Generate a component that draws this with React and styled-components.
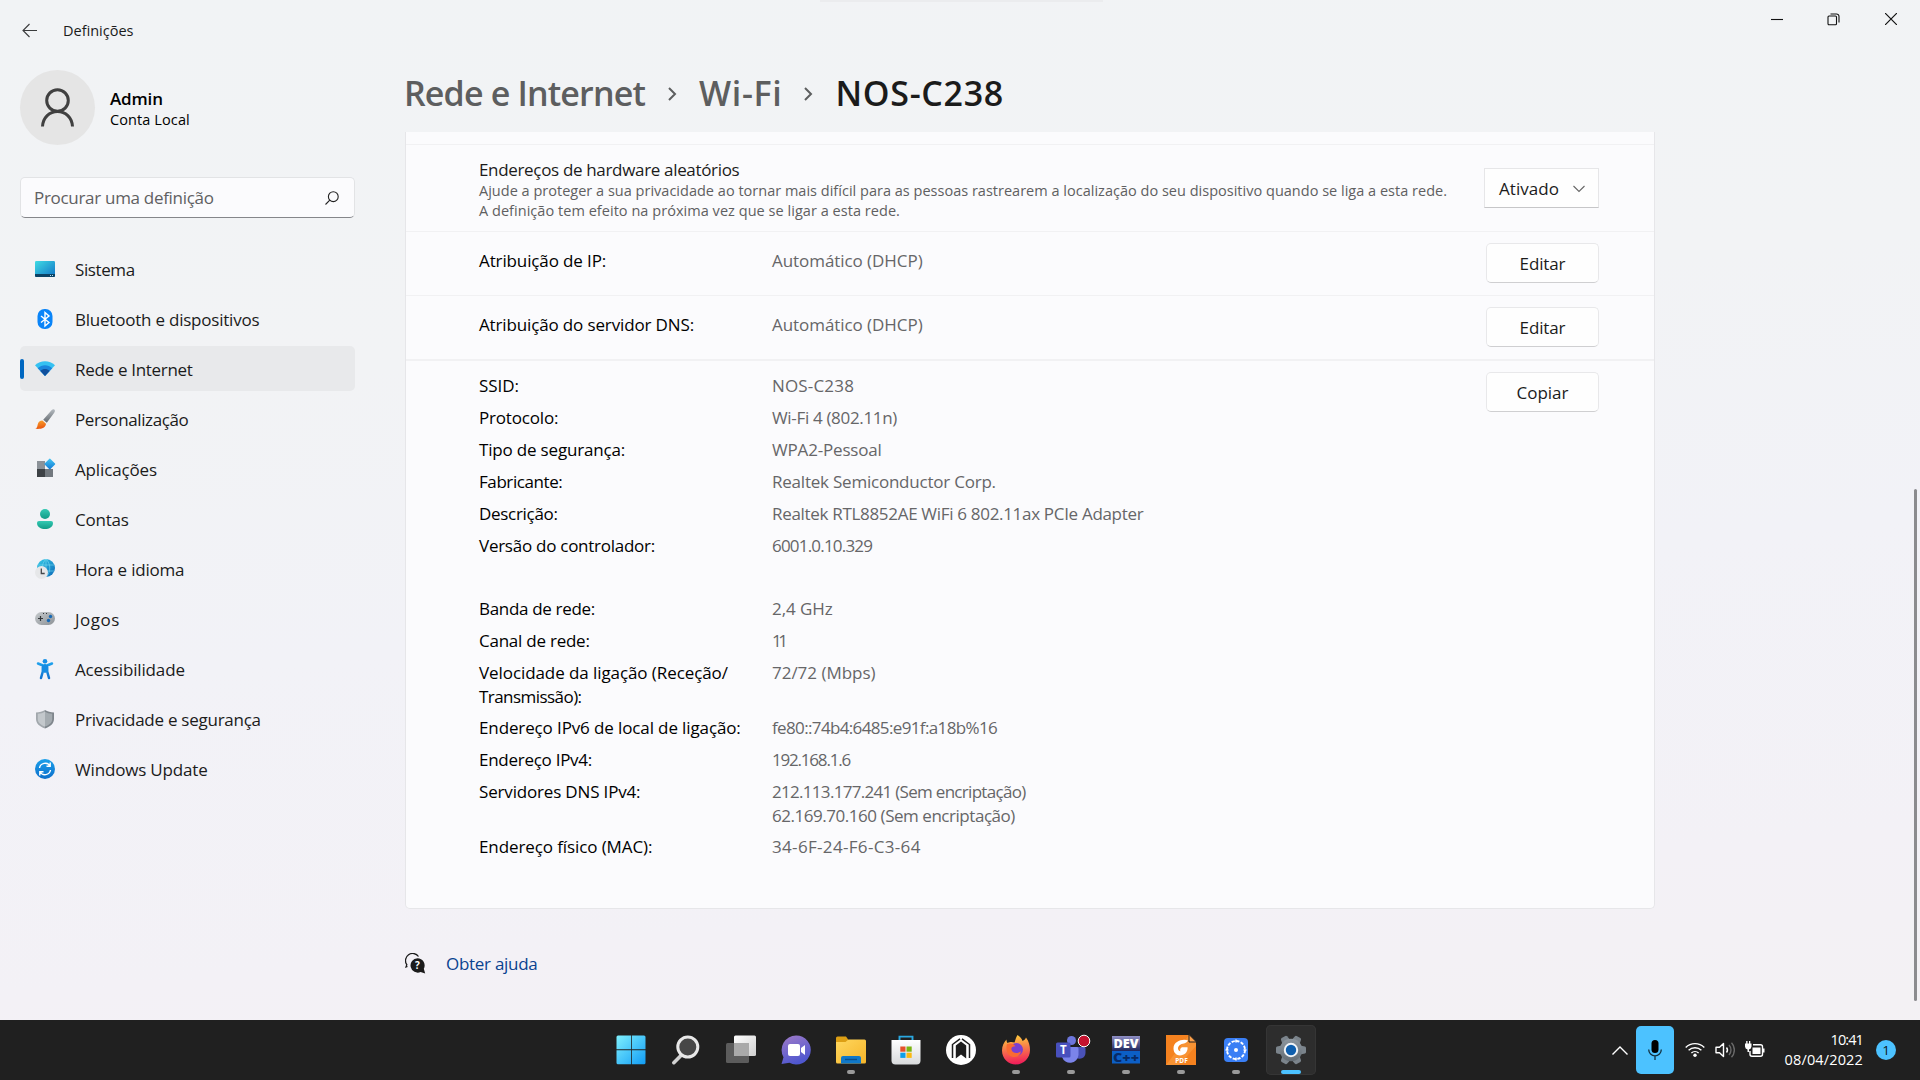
import React from "react";
import styled, { createGlobalStyle } from "styled-components";

const GlobalStyle = createGlobalStyle`
  * { box-sizing: border-box; }
  body { margin: 0; overflow: hidden; font-family: "Open Sans", "Noto Sans", sans-serif; font-size: 17px; color: #1b1b1b; }
`;

const Desktop = styled.div`
  position: relative;
  display: flex;
  flex-direction: column;
  width: 1920px;
  height: 1080px;
  overflow: hidden;
  background: linear-gradient(175deg, #f1f3f5 0%, #f2f3f5 32%, #f2f2f7 55%, #f3f1f6 80%, #f3f1f3 100%);
`;
const TopHandle = styled.div`
  position: absolute;
  left: 820px;
  top: 0;
  width: 283px;
  height: 2px;
  background: #ebecee;
`;
const Txt = styled.span`
  white-space: pre;
  letter-spacing: ${(p) => p.$ls || 0}px;
`;

/* Title bar */
const TitleBar = styled.header`
  display: flex;
  justify-content: space-between;
  height: 62px;
  flex: none;
`;
const TitleLeft = styled.div`
  display: flex;
  align-items: center;
  gap: 25px;
  padding: 0 0 2px 22px;
  font-size: 14.5px;
  svg { display: block; }
`;
const WindowControls = styled.div`
  display: flex;
  height: 38px;
  padding-right: 1px;
`;
const ControlButton = styled.div`
  width: 57px;
  display: flex;
  align-items: center;
  justify-content: center;
`;

const Body = styled.div`
  display: flex;
  flex: 1;
  min-height: 0;
`;

/* Sidebar */
const Sidebar = styled.aside`
  width: 335px;
  margin-left: 20px;
  padding-top: 8px;
`;
const Account = styled.div`
  display: flex;
  align-items: center;
  gap: 15px;
`;
const Avatar = styled.div`
  width: 75px;
  height: 75px;
  border-radius: 50%;
  background: #e5e5e5;
  display: flex;
  align-items: center;
  justify-content: center;
`;
const AccountText = styled.div`
  display: flex;
  flex-direction: column;
  color: #000;
  padding-top: 3px;
`;
const AccountName = styled(Txt)`
  font-weight: 600;
  line-height: 22px;
`;
const AccountKind = styled(Txt)`
  font-size: 14.5px;
  line-height: 20px;
`;
const SearchBox = styled.div`
  display: flex;
  align-items: center;
  justify-content: space-between;
  height: 41px;
  margin-top: 32px;
  padding: 0 15px 0 13px;
  background: #fbfbfd;
  border: 1px solid #e2e3e5;
  border-bottom: 1px solid #85868a;
  border-radius: 5px;
  color: #5f6062;
`;
const Nav = styled.nav`
  display: flex;
  flex-direction: column;
  gap: 5px;
  margin-top: 28px;
`;
const NavItem = styled.div`
  display: flex;
  align-items: center;
  height: 45px;
  padding-top: 2px;
  border-radius: 5px;
  background: ${(p) => (p.$active ? "#e8e9eb" : "transparent")};
`;
const NavMark = styled.div`
  width: 4px;
  height: 20px;
  margin: -1px 11px 0 0;
  border-radius: 2px;
  background: ${(p) => (p.$active ? "#0067c0" : "transparent")};
`;
const NavIcon = styled.svg`
  width: 20px;
  height: 20px;
  margin-right: 20px;
  overflow: visible;
`;

/* Main column */
const Main = styled.main`
  width: 1250px;
  margin-left: 50px;
`;
const Breadcrumb = styled.div`
  display: flex;
  align-items: center;
  height: 70px;
  margin-left: -1px;
  padding-bottom: 8px;
  font-size: 34px;
  font-weight: 600;
  line-height: 48px;
`;
const Crumb = styled(Txt)`
  color: ${(p) => (p.$current ? "#1b1b1b" : "#5d5e5f")};
`;
const CrumbArrow = styled.svg`
  width: 9px;
  height: 14px;
  margin: 1px ${(p) => p.$after}px 0 ${(p) => p.$before}px;
`;
const Card = styled.section`
  height: 777px;
  background: #fbfbfd;
  border: 1px solid #e6e6e9;
  border-top: none;
  border-radius: 0 0 5px 5px;
`;
const CardStrip = styled.div`
  height: 13px;
  border-bottom: 1px solid #f1f1f3;
`;
const SettingRow = styled.div`
  display: flex;
  height: ${(p) => p.$h}px;
  padding: ${(p) => p.$top}px 55px 0 73px;
  border-bottom: ${(p) => p.$line || 1}px solid #f1f1f3;
`;
const SettingBody = styled.div`
  display: flex;
  flex-direction: column;
  flex: 1;
  padding-top: 2px;
`;
const SettingTitle = styled(Txt)`
  line-height: 22px;
`;
const SettingHint = styled(Txt)`
  font-size: 14.5px;
  line-height: 20px;
  color: #5f5f61;
`;
const Label = styled.div`
  width: 293px;
  flex: none;
  padding-top: ${(p) => p.$top || 0}px;
  color: #000;
`;
const Value = styled.div`
  flex: 1;
  padding-top: ${(p) => p.$top || 0}px;
  color: #666668;
`;
const Line = styled(Txt)`
  display: block;
`;
const Button = styled.div`
  display: flex;
  align-items: center;
  justify-content: center;
  width: 113px;
  height: 40px;
  padding-top: 1px;
  background: #fefefe;
  border: 1px solid #e8e8ea;
  border-bottom-color: #cfcfd1;
  border-radius: 5px;
`;
const Combo = styled.div`
  display: flex;
  align-items: center;
  justify-content: space-between;
  width: 115px;
  height: 40px;
  margin-top: 11px;
  padding: 1px 13px 0 14px;
  background: #fefefe;
  border: 1px solid #e6e6e8;
  border-bottom-color: #c6c6c8;
`;
const Details = styled.div`
  display: flex;
  align-items: flex-start;
  padding: 11px 55px 0 73px;
`;
const DetailList = styled.div`
  display: flex;
  flex-direction: column;
  gap: 8px;
  flex: 1;
  padding-top: 2px;
`;
const DetailRow = styled.div`
  display: flex;
  line-height: ${(p) => (p.$double ? 23.6 : 24)}px;
  margin-top: ${(p) => (p.$section ? 31 : 0)}px;
`;
const HelpLink = styled.div`
  display: flex;
  align-items: center;
  gap: 20px;
  margin-top: 43px;
  color: #0a4390;
`;
const Scrollbar = styled.div`
  width: 3px;
  height: 512px;
  margin: 427px 3px 0 auto;
  border-radius: 2px;
  background: #8b8b8e;
`;

/* Taskbar */
const Taskbar = styled.footer`
  display: flex;
  align-items: center;
  justify-content: space-between;
  height: 60px;
  flex: none;
  padding: 0 24px 0 606px;
  background: #202020;
  color: #fff;
`;
const Pinned = styled.div`
  display: flex;
  gap: 5px;
`;
const Tile = styled.div`
  display: flex;
  flex-direction: column;
  align-items: center;
  justify-content: space-between;
  width: 50px;
  height: 50px;
  padding: 9px 0 0;
  border-radius: 5px;
  background: ${(p) => (p.$active ? "#2d2d2d" : "transparent")};
  box-shadow: ${(p) => (p.$active ? "inset 0 0 0 1px #353535" : "none")};
`;
const TileIcon = styled.svg`
  width: 32px;
  height: 32px;
  overflow: visible;
`;
const Pill = styled.div`
  height: 4px;
  margin-bottom: 1px;
  border-radius: 2px;
  width: ${(p) => (p.$kind === "active" ? 20 : 8)}px;
  background: ${(p) => (p.$kind === "active" ? "#4cc2ff" : p.$kind ? "#9a9a9a" : "transparent")};
`;
const Tray = styled.div`
  display: flex;
  align-items: center;
`;
const MicTile = styled.div`
  display: flex;
  align-items: center;
  justify-content: center;
  width: 38px;
  height: 48px;
  margin: 0 11px 0 8px;
  border-radius: 5px;
  background: #4cc2ff;
`;
const TrayIcons = styled.div`
  display: flex;
  gap: 10px;
`;
const Clock = styled.div`
  display: flex;
  flex-direction: column;
  align-items: flex-end;
  width: 98px;
  font-size: 14.5px;
  line-height: 20px;
`;
const Badge = styled.div`
  display: flex;
  align-items: center;
  justify-content: center;
  width: 20px;
  height: 20px;
  margin-left: 13px;
  border-radius: 50%;
  background: #4cc2ff;
  color: #101820;
  font-size: 13.5px;
`;

const Grad = ({ id, a, b, x2 = 1, y2 = 1 }) => (
  <linearGradient id={id} x1="0" y1="0" x2={x2} y2={y2}>
    <stop offset="0" stopColor={a} />
    <stop offset="1" stopColor={b} />
  </linearGradient>
);

const navItems = [
  ["Sistema", -0.4, <>
    <Grad id="n1" a="#3fdbe4" b="#1173c6" />
    <rect y="1" width="20" height="16" rx="1.2" fill="url(#n1)" />
    <path d="M0 14h20v1.8a1.2 1.2 0 0 1-1.2 1.2H1.2A1.2 1.2 0 0 1 0 15.8z" fill="#0b4265" />
    <path d="M15 15h1v1h-1zM17 15h1v1h-1z" fill="#b8e4f5" />
  </>],
  ["Bluetooth e dispositivos", -0.22, <>
    <rect x="2.5" y="-1" width="15" height="20" rx="7" fill="#0a84f8" />
    <path d="M6 6l8 6.5-4 3.5V2.5l4 3.5-8 6.500" fill="none" stroke="#fff" strokeWidth="1.4" />
  </>],
  ["Rede e Internet", -0.3, <>
    <path d="M0 5.300C5.500-.1 14.500-.1 20 5.300L10 16z" fill="#35c1f1" />
    <path d="M2.700 8.200c4.200-4.100 10.400-4.100 14.600 0L10 16z" fill="#1b86dc" />
    <path d="M5.400 11c2.700-2.600 6.500-2.600 9.200 0L10 16z" fill="#0f4f9c" />
  </>],
  ["Personalização", -0.38, <>
    <Grad id="n4" a="#f9a52c" b="#ea5a12" x2={0.2} />
    <Grad id="n5" a="#b5bbc0" b="#646a70" x2={0} />
    <path d="M19.300-.5c1 .8.700 2-.1 3.200l-7.400 10-3.600-3L16.500.3c.9-.9 2-1.500 2.800-.8z" fill="url(#n5)" />
    <path d="M7.400 10.500l3.600 3.200c-.3 4.200-4.600 5.600-10.700 5.100 2-1 2-2.300 2.400-4.300.5-2.500 2.400-4 4.700-4z" fill="url(#n4)" />
  </>],
  ["Aplicações", -0.14, <>
    <rect x="2" y="1" width="8" height="8" fill="#8c9298" />
    <rect x="2" y="9" width="8" height="8" fill="#3d4145" />
    <rect x="10" y="9" width="8" height="8" fill="#72787e" />
    <Grad id="n6" a="#46c6f2" b="#0f78d4" />
    <rect x="10.800" y="0" width="8" height="8" rx=".6" transform="rotate(45 14.800 4)" fill="url(#n6)" />
  </>],
  ["Contas", -0.2, <>
    <Grad id="n7" a="#34c9b3" b="#119b86" x2={0} />
    <circle cx="10" cy="4" r="5" fill="url(#n7)" />
    <path d="M4 11h12a2 2 0 0 1 2 2c0 4-4 6-8 6s-8-2-8-6a2 2 0 0 1 2-2z" fill="url(#n7)" />
  </>],
  ["Hora e idioma", -0.2, <>
    <Grad id="n8" a="#38cbe8" b="#0c69b8" />
    <circle cx="11" cy="8" r="9" fill="url(#n8)" />
    <path d="M11-1v18M3 5h16M4 11h15M11-1c-5 5-5 13 0 18 5-5 5-13 0-18" fill="none" stroke="#7fe0f2" strokeWidth=".8" opacity=".7" />
    <circle cx="6.500" cy="12.500" r="6.500" fill="#e6e7e9" />
    <path d="M6.300 8.500v5h3.400" fill="none" stroke="#43474b" strokeWidth="1.300" />
  </>],
  ["Jogos", 0.5, <>
    <Grad id="n9" a="#c6cacd" b="#8d9297" />
    <rect y="2" width="20" height="13" rx="6.500" fill="url(#n9)" />
    <path d="M5.500 6v5M3 8.500h5" stroke="#33373b" strokeWidth="1.200" />
    <path d="M8 3.500h1M11 3.500h1" stroke="#33373b" />
    <circle cx="15.500" cy="6.500" r="1.700" fill="#1769b5" />
    <circle cx="13.500" cy="10.500" r="1.700" fill="#1769b5" />
  </>],
  ["Acessibilidade", -0.16, <>
    <Grad id="n10" a="#1fa0ec" b="#1173d0" x2={0} />
    <circle cx="10" cy="1.200" r="2.300" fill="#1890e6" />
    <path d="M3 3.500L8 5.500h4l5-2M10 5v5M7.800 6v5.500L6 18M12.200 6v5.500L14 18" fill="none" stroke="url(#n10)" strokeWidth="2.500" strokeLinecap="round" strokeLinejoin="round" />
    <path d="M7 5h6v6.500l-3 1.500-3-1.500z" fill="#178ce2" />
  </>],
  ["Privacidade e segurança", -0.26, <>
    <path d="M10 0c2.500 1.700 5.500 2.400 9 2.500v6.500c0 4.500-3.500 7.500-9 9.500z" fill="#7f868c" />
    <path d="M10 0C7.500 1.700 4.500 2.400 1 2.500v6.500c0 4.500 3.500 7.500 9 9.500z" fill="#a2a8ad" />
    <path d="M10 1.800c2 1.200 4.300 1.800 7.200 2V9c0 3.500-2.700 5.900-7.200 7.600z" fill="#a4abb0" />
    <path d="M10 1.800C8 3 5.700 3.600 2.800 3.800V9c0 3.500 2.700 5.900 7.200 7.600z" fill="#c3c8cc" />
  </>],
  ["Windows Update", -0.17, <>
    <Grad id="n11" a="#1ba0ea" b="#0d6fcb" x2={0} />
    <circle cx="10" cy="9" r="10" fill="url(#n11)" />
    <path d="M4.500 8a5.700 5.700 0 0 1 10.500-2M15.500 10A5.700 5.700 0 0 1 5 12M15.200 2.500v3.700h-3.700M4.800 15.500v-3.700h3.700" fill="none" stroke="#fff" strokeWidth="1.400" />
  </>],
];

const details = [
  { label: [["SSID:", -0.05]], value: [["NOS-C238", 0.17]] },
  { label: [["Protocolo:", -0.18]], value: [["Wi-Fi 4 (802.11n)", -0.33]] },
  { label: [["Tipo de segurança:", -0.18]], value: [["WPA2-Pessoal", -0.18]] },
  { label: [["Fabricante:", -0.42]], value: [["Realtek Semiconductor Corp.", -0.22]] },
  { label: [["Descrição:", -0.3]], value: [["Realtek RTL8852AE WiFi 6 802.11ax PCIe Adapter", -0.31]] },
  { label: [["Versão do controlador:", -0.26]], value: [["6001.0.10.329", -0.8]] },
  { section: true, label: [["Banda de rede:", -0.32]], value: [["2,4 GHz", -0.06]] },
  { label: [["Canal de rede:", -0.24]], value: [["11", -3.4]] },
  { label: [["Velocidade da ligação (Receção/", -0.08], ["Transmissão):", -0.55]], value: [["72/72 (Mbps)", -0.02]] },
  { label: [["Endereço IPv6 de local de ligação:", -0.12]], value: [["fe80::74b4:6485:e91f:a18b%16", -0.64]] },
  { label: [["Endereço IPv4:", -0.27]], value: [["192.168.1.6", -1.2]] },
  { label: [["Servidores DNS IPv4:", -0.17]], value: [["212.113.177.241 (Sem encriptação)", -0.7], ["62.169.70.160 (Sem encriptação)", -0.46]] },
  { label: [["Endereço físico (MAC):", -0.1]], value: [["34-6F-24-F6-C3-64", 0.33]] },
];

const gearTeeth = [0, 60, 120, 180, 240, 300];

const apps = [
  { name: "start", icon: <>
    <Grad id="t1" a="#7ff0fd" b="#119cf5" />
    <path d="M3 1.500h13v13.800H1.500V3A1.500 1.500 0 0 1 3 1.500zM16.800 1.500H29A1.500 1.500 0 0 1 30.500 3v12.300H16.800zM1.500 16.300H16v14H3a1.500 1.500 0 0 1-1.500-1.500zM16.800 16.300h13.700v12.500a1.500 1.500 0 0 1-1.500 1.500H16.800z" fill="url(#t1)" />
  </> },
  { name: "search", icon: <>
    <path d="M11 21.500L3.800 28.700" stroke="#d2d2d2" strokeWidth="3.600" strokeLinecap="round" />
    <circle cx="17.800" cy="13" r="10" fill="#474747" stroke="#e8e8e8" strokeWidth="3" />
  </> },
  { name: "taskview", icon: <>
    <Grad id="t2" a="#ffffff" b="#cfcfcf" />
    <rect x="1" y="9" width="23" height="20" rx="1.500" fill="#5c5c5c" />
    <rect x="9" y="1.500" width="22" height="20.500" rx="1.500" fill="url(#t2)" />
    <path d="M9 9h15v13H10.500A1.500 1.500 0 0 1 9 20.500z" fill="#a9a9a9" />
  </> },
  { name: "chat", icon: <>
    <Grad id="t3" a="#a07bc8" b="#4f57cf" x2={0.4} />
    <path d="M16 1.500a14.500 14.500 0 1 1-6.500 27.300L1.500 30l2-6.800A14.500 14.500 0 0 1 16 1.500z" fill="url(#t3)" />
    <rect x="8" y="10" width="12" height="12" rx="2" fill="#fff" />
    <path d="M21 14l4-3v10l-4-3z" fill="#fff" />
  </> },
  { name: "explorer", open: true, icon: <>
    <Grad id="t4" a="#ffd75e" b="#f5b52a" />
    <path d="M1 4a1.500 1.500 0 0 1 1.500-1.500h8.500l2.500 3.500v3H1z" fill="#dd9f14" />
    <path d="M1 8h9.500l3-2.500H29.500A1.500 1.500 0 0 1 31 7v21a1.500 1.500 0 0 1-1.500 1.500h-27A1.500 1.500 0 0 1 1 28z" fill="url(#t4)" />
    <path d="M6 29.500V24a2 2 0 0 1 2-2h16a2 2 0 0 1 2 2v5.500z" fill="#1078c8" />
    <path d="M10 25.500h12" stroke="#0b4f8c" strokeWidth="1.400" />
  </> },
  { name: "store", icon: <>
    <Grad id="t5" a="#ffffff" b="#d8dadc" x2={0} />
    <path d="M9.500 7V2.600h13V7" fill="none" stroke="#2aa8e0" strokeWidth="1.900" />
    <path d="M1.500 6h29v20.500a4 4 0 0 1-4 4h-21a4 4 0 0 1-4-4z" fill="url(#t5)" />
    <rect x="10.300" y="12.500" width="5.200" height="5.200" fill="#e5512a" />
    <rect x="16.500" y="12.500" width="5.200" height="5.200" fill="#7bb411" />
    <rect x="10.300" y="18.700" width="5.200" height="5.200" fill="#0f9fe8" />
    <rect x="16.500" y="18.700" width="5.200" height="5.200" fill="#fbb911" />
  </> },
  { name: "recorder", icon: <>
    <circle cx="16" cy="16" r="15" fill="#fff" />
    <path d="M10.800 24.500V11.500L16 7.500l5.200 4v13L16 20.500z" fill="#1d1d1d" />
    <path d="M7.500 24V10.500L15 4.800M24.500 24V10.500L17 4.800" fill="none" stroke="#1d1d1d" strokeWidth="1.500" />
  </> },
  { name: "firefox", open: true, icon: <>
    <Grad id="t6" a="#ffd43a" b="#f0205a" x2={0.1} />
    <path d="M17.500 1c3 2 4.500 4 5 6 2-.8 3-2 3.500-3.500C29 7.500 30 12 30 16c0 8-6.200 14.500-14 14.500S2 24.500 2 16.500C2 12 4 8 6.500 5.500c0 1.500.3 2.500 1 3.500 3-1.500 5-1 7-.5 1-3 1.500-5 3-7.500z" fill="url(#t6)" />
    <circle cx="16.500" cy="15.500" r="6.500" fill="#7a3fd0" />
    <path d="M7 10c4-1.500 7 0 8.500 2.200-3.500 0-4.500 1.500-4 3.500 1 3.500 6 4.500 9.500 1.500-.7 4.500-5 7-9.500 5.300C7 21 5.500 14.500 7 10z" fill="#fb6a32" />
  </> },
  { name: "teams", open: true, icon: <>
    <circle cx="16.500" cy="6.500" r="4.500" fill="#6d76dc" />
    <path d="M20 13h9a1.500 1.500 0 0 1 1.500 1.500V19a6 6 0 0 1-9 5z" fill="#4a52b8" />
    <path d="M8 13h14a1.500 1.500 0 0 1 1.500 1.500V21a8.500 8.500 0 0 1-16.500 2z" fill="#7b84ea" />
    <rect x="1" y="8.500" width="14.500" height="15" rx="1.500" fill="#4850bd" />
    <text x="8.300" y="20" fontSize="11.500" fontWeight="700" textAnchor="middle" fill="#fff">T</text>
    <circle cx="29" cy="7" r="5.800" fill="#c4122f" stroke="#fff" strokeWidth="1" />
  </> },
  { name: "devcpp", open: true, icon: <>
    <Grad id="t7" a="#8f8fc4" b="#151e55" x2={0} />
    <rect x="2" y="2" width="28" height="16" fill="url(#t7)" />
    <rect x="2" y="17" width="28" height="12.500" fill="#0c5fc6" />
    <text x="16" y="28" fontSize="12.500" fontWeight="800" textAnchor="middle" textLength="26" lengthAdjust="spacingAndGlyphs" fill="#072a66">C++</text>
    <text x="16" y="14" fontSize="12" fontWeight="800" textAnchor="middle" textLength="25" lengthAdjust="spacingAndGlyphs" fill="#fff">DEV</text>
  </> },
  { name: "pdf", open: true, icon: <>
    <path d="M1 1h23l7 7v23H1z" fill="#f5821f" />
    <path d="M1 31L24 1l7 7v4L14 31z" fill="#fa9a3c" opacity=".7" />
    <path d="M24 .5V8h7.500z" fill="#fba04a" stroke="#202020" strokeWidth="1" />
    <path d="M23 6.500C18 4.500 8.500 7 8.500 14.500c0 5 4 7.500 8 6.800 4-.8 6.500-4 6-8h-5.500c-1.800 1-2.400 2.700-1.500 4-3.200-.3-3.400-5.200.3-6.800 2.800-1.200 5.500-.8 7.200-4z" fill="#fff" />
    <text x="16.500" y="28.800" fontSize="6.500" fontWeight="700" textAnchor="middle" fill="#fff">PDF</text>
  </> },
  { name: "focus", open: true, icon: <>
    <rect x="4" y="4" width="24" height="24" rx="4" fill="#3a7ff5" />
    <circle cx="16" cy="16" r="9" fill="none" stroke="#fff" strokeWidth="1.900" strokeDasharray="3.300 1.400" />
    <circle cx="16" cy="16" r="2" fill="#fff" />
    <path d="M16 5.500v3M16 23.500v3M5.500 16h3M23.500 16h3" stroke="#fff" strokeWidth="1.500" />
  </> },
  { name: "settings", open: true, active: true, icon: <>
    <Grad id="t8" a="#8e979f" b="#636c74" x2={0} />
    <g fill="#7b848c">
      {gearTeeth.map((r) => (
        <path key={r} d="M11.500 7L12.500 2a1.500 1.500 0 0 1 1.300-1h4.400a1.500 1.500 0 0 1 1.300 1l1 5z" transform={`rotate(${r + 30} 16 16)`} />
      ))}
    </g>
    <circle cx="16" cy="16" r="11.300" fill="url(#t8)" />
    <circle cx="16" cy="16" r="6.200" fill="#0f5fae" stroke="#f1f4f7" strokeWidth="2" />
  </> },
];

const Lines = ({ items }) => items.map(([text, ls]) => <Line key={text} $ls={ls}>{text}</Line>);

export default function App() {
  return (
    <Desktop>
      <GlobalStyle />
      <TopHandle />
      <TitleBar>
        <TitleLeft>
          <svg width="16" height="15" viewBox="0 0 16 15" fill="none" stroke="#3a3b3c" strokeWidth="1.100">
            <path d="M15 7.500H1M7.500 1L1 7.500 7.500 14" />
          </svg>
          <Txt>Definições</Txt>
        </TitleLeft>
        <WindowControls>
          <ControlButton>
            <svg width="12" height="12" viewBox="0 0 12 12"><path d="M0 6.500h12" stroke="#111" strokeWidth="1.100" /></svg>
          </ControlButton>
          <ControlButton>
            <svg width="13" height="13" viewBox="0 0 13 13" fill="none" stroke="#111" strokeWidth="1.100">
              <rect x="1" y="3" width="8.500" height="8.800" rx="1" />
              <path d="M3.500 1H9.500a2.500 2.500 0 0 1 2.500 2.500v6" />
            </svg>
          </ControlButton>
          <ControlButton>
            <svg width="12" height="12" viewBox="0 0 12 12"><path d="M0 0l12 12M12 0L0 12" stroke="#111" strokeWidth="1.200" /></svg>
          </ControlButton>
        </WindowControls>
      </TitleBar>

      <Body>
        <Sidebar>
          <Account>
            <Avatar>
              <svg width="34" height="40" viewBox="0 0 34 40" fill="none" stroke="#404040" strokeWidth="3">
                <circle cx="16.500" cy="12.500" r="10.800" />
                <path d="M1.500 38.500C2 29.500 8.500 23.500 16.500 23.500s14.500 6 15 15" />
              </svg>
            </Avatar>
            <AccountText>
              <AccountName $ls={-0.15}>Admin</AccountName>
              <AccountKind $ls={0.1}>Conta Local</AccountKind>
            </AccountText>
          </Account>
          <SearchBox>
            <Txt $ls={-0.3}>Procurar uma definição</Txt>
            <svg width="14" height="14" viewBox="0 0 14 14" fill="none" stroke="#222" strokeWidth="1.100">
              <circle cx="8.300" cy="5.700" r="4.900" />
              <path d="M4.800 9.200L.5 13.500" />
            </svg>
          </SearchBox>
          <Nav>
            {navItems.map(([label, ls, icon]) => {
              const active = label === "Rede e Internet";
              return (
                <NavItem key={label} $active={active}>
                  <NavMark $active={active} />
                  <NavIcon viewBox="0 0 20 20">{icon}</NavIcon>
                  <Txt $ls={ls}>{label}</Txt>
                </NavItem>
              );
            })}
          </Nav>
        </Sidebar>

        <Main>
          <Breadcrumb>
            <Crumb $ls={-0.84}>Rede e Internet</Crumb>
            <CrumbArrow $before={23} $after={22} viewBox="0 0 9 14"><path d="M1 1l6 6-6 6" fill="none" stroke="#5d5e5f" strokeWidth="2" /></CrumbArrow>
            <Crumb $ls={0.65}>Wi-Fi</Crumb>
            <CrumbArrow $before={22} $after={22} viewBox="0 0 9 14"><path d="M1 1l6 6-6 6" fill="none" stroke="#5d5e5f" strokeWidth="2" /></CrumbArrow>
            <Crumb $current $ls={0.7}>NOS-C238</Crumb>
          </Breadcrumb>

          <Card>
            <CardStrip />
            <SettingRow $h={87} $top={12}>
              <SettingBody>
                <SettingTitle $ls={-0.33}>Endereços de hardware aleatórios</SettingTitle>
                <SettingHint $ls={0.012}>Ajude a proteger a sua privacidade ao tornar mais difícil para as pessoas rastrearem a localização do seu dispositivo quando se liga a esta rede.</SettingHint>
                <SettingHint $ls={0.04}>A definição tem efeito na próxima vez que se ligar a esta rede.</SettingHint>
              </SettingBody>
              <Combo>
                <Txt $ls={0.05}>Ativado</Txt>
                <svg width="12" height="8" viewBox="0 0 12 8"><path d="M.5 1L6 6.500 11.500 1" fill="none" stroke="#666" strokeWidth="1.100" /></svg>
              </Combo>
            </SettingRow>
            <SettingRow $h={64} $top={11}>
              <Label $top={6}><Line $ls={-0.12}>Atribuição de IP:</Line></Label>
              <Value $top={6}><Line $ls={-0.06}>Automático (DHCP)</Line></Value>
              <Button><Txt $ls={-0.12}>Editar</Txt></Button>
            </SettingRow>
            <SettingRow $h={65} $top={11} $line={2}>
              <Label $top={6}><Line $ls={-0.14}>Atribuição do servidor DNS:</Line></Label>
              <Value $top={6}><Line $ls={-0.06}>Automático (DHCP)</Line></Value>
              <Button><Txt $ls={-0.12}>Editar</Txt></Button>
            </SettingRow>
            <Details>
              <DetailList>
                {details.map((d) => (
                  <DetailRow key={d.label[0][0]} $section={d.section} $double={d.label.length + d.value.length > 2}>
                    <Label><Lines items={d.label} /></Label>
                    <Value><Lines items={d.value} /></Value>
                  </DetailRow>
                ))}
              </DetailList>
              <Button><Txt>Copiar</Txt></Button>
            </Details>
          </Card>

          <HelpLink>
            <svg width="21" height="21" viewBox="0 0 21 21">
              <path d="M2.500 13.500L1 14l.8-2.300A7 7 0 1 1 13.500 3.500" fill="none" stroke="#1b1b1b" strokeWidth="1.300" />
              <path d="M12.500 5.200a7.200 7.200 0 0 1 6.300 10.600l1.400 4.600-4.600-1.400A7.200 7.200 0 1 1 12.500 5.200z" fill="#1b1b1b" />
              <text x="12.300" y="16" fontSize="10" fontWeight="700" textAnchor="middle" fill="#fff">?</text>
            </svg>
            <Txt $ls={-0.28}>Obter ajuda</Txt>
          </HelpLink>
        </Main>
        <Scrollbar />
      </Body>

      <Taskbar>
        <Pinned>
          {apps.map((a) => (
            <Tile key={a.name} $active={a.active}>
              <TileIcon viewBox="0 0 32 32">{a.icon}</TileIcon>
              <Pill $kind={a.active ? "active" : a.open ? "open" : ""} />
            </Tile>
          ))}
        </Pinned>
        <Tray>
          <svg width="16" height="9" viewBox="0 0 16 9"><path d="M.5 8.500L8 1l7.500 7.500" fill="none" stroke="#fff" strokeWidth="1.400" /></svg>
          <MicTile>
            <svg width="14" height="20" viewBox="0 0 14 20">
              <rect x="3.500" y="0" width="7" height="13" rx="3.500" fill="#000" />
              <path d="M.7 9.500a6.300 6.300 0 0 0 12.600 0M7 16v4" fill="none" stroke="#12303f" strokeWidth="1.300" />
            </svg>
          </MicTile>
          <TrayIcons>
            <svg width="20" height="20" viewBox="0 0 20 20" fill="none" stroke="#fff" strokeWidth="1.400">
              <path d="M.7 7.500a13.200 13.200 0 0 1 18.600 0M3.600 10.300a9.200 9.200 0 0 1 12.800 0M6.400 13.100a5.200 5.200 0 0 1 7.200 0" />
              <circle cx="10" cy="15.300" r="1.700" fill="#fff" stroke="none" />
            </svg>
            <svg width="20" height="20" viewBox="0 0 20 20" fill="none" stroke="#fff" strokeWidth="1.400">
              <path d="M1 7.300h3.500L8.500 3.500v13l-4-3.800H1z" strokeLinejoin="round" />
              <path d="M11.500 7.500a4 4 0 0 1 0 5" />
              <path d="M14 5a7.300 7.300 0 0 1 0 10M16.500 2.800a10.500 10.500 0 0 1 0 14.400" stroke="#6a6a6a" />
            </svg>
            <svg width="20" height="20" viewBox="0 0 20 20">
              <path d="M8 4.700h7.500a2 2 0 0 1 2 2v7.600a2 2 0 0 1-2 2H7a2 2 0 0 1-2-2V11" fill="none" stroke="#fff" strokeWidth="1.400" />
              <path d="M7.500 7.500h8v6.500h-8zM18 8.500h1.500v4H18z" fill="#fff" />
              <path d="M0 3.500h6.500v3a3.200 3.200 0 0 1-2.500 3V12H2.500V9.500A3.200 3.200 0 0 1 0 6.500zM1.200 1h1.300v3H1.200zM4 1h1.300v3H4z" fill="#fff" />
            </svg>
          </TrayIcons>
          <Clock>
            <Txt $ls={-0.9}>10:41</Txt>
            <Txt $ls={0.15}>08/04/2022</Txt>
          </Clock>
          <Badge>1</Badge>
        </Tray>
      </Taskbar>
    </Desktop>
  );
}
